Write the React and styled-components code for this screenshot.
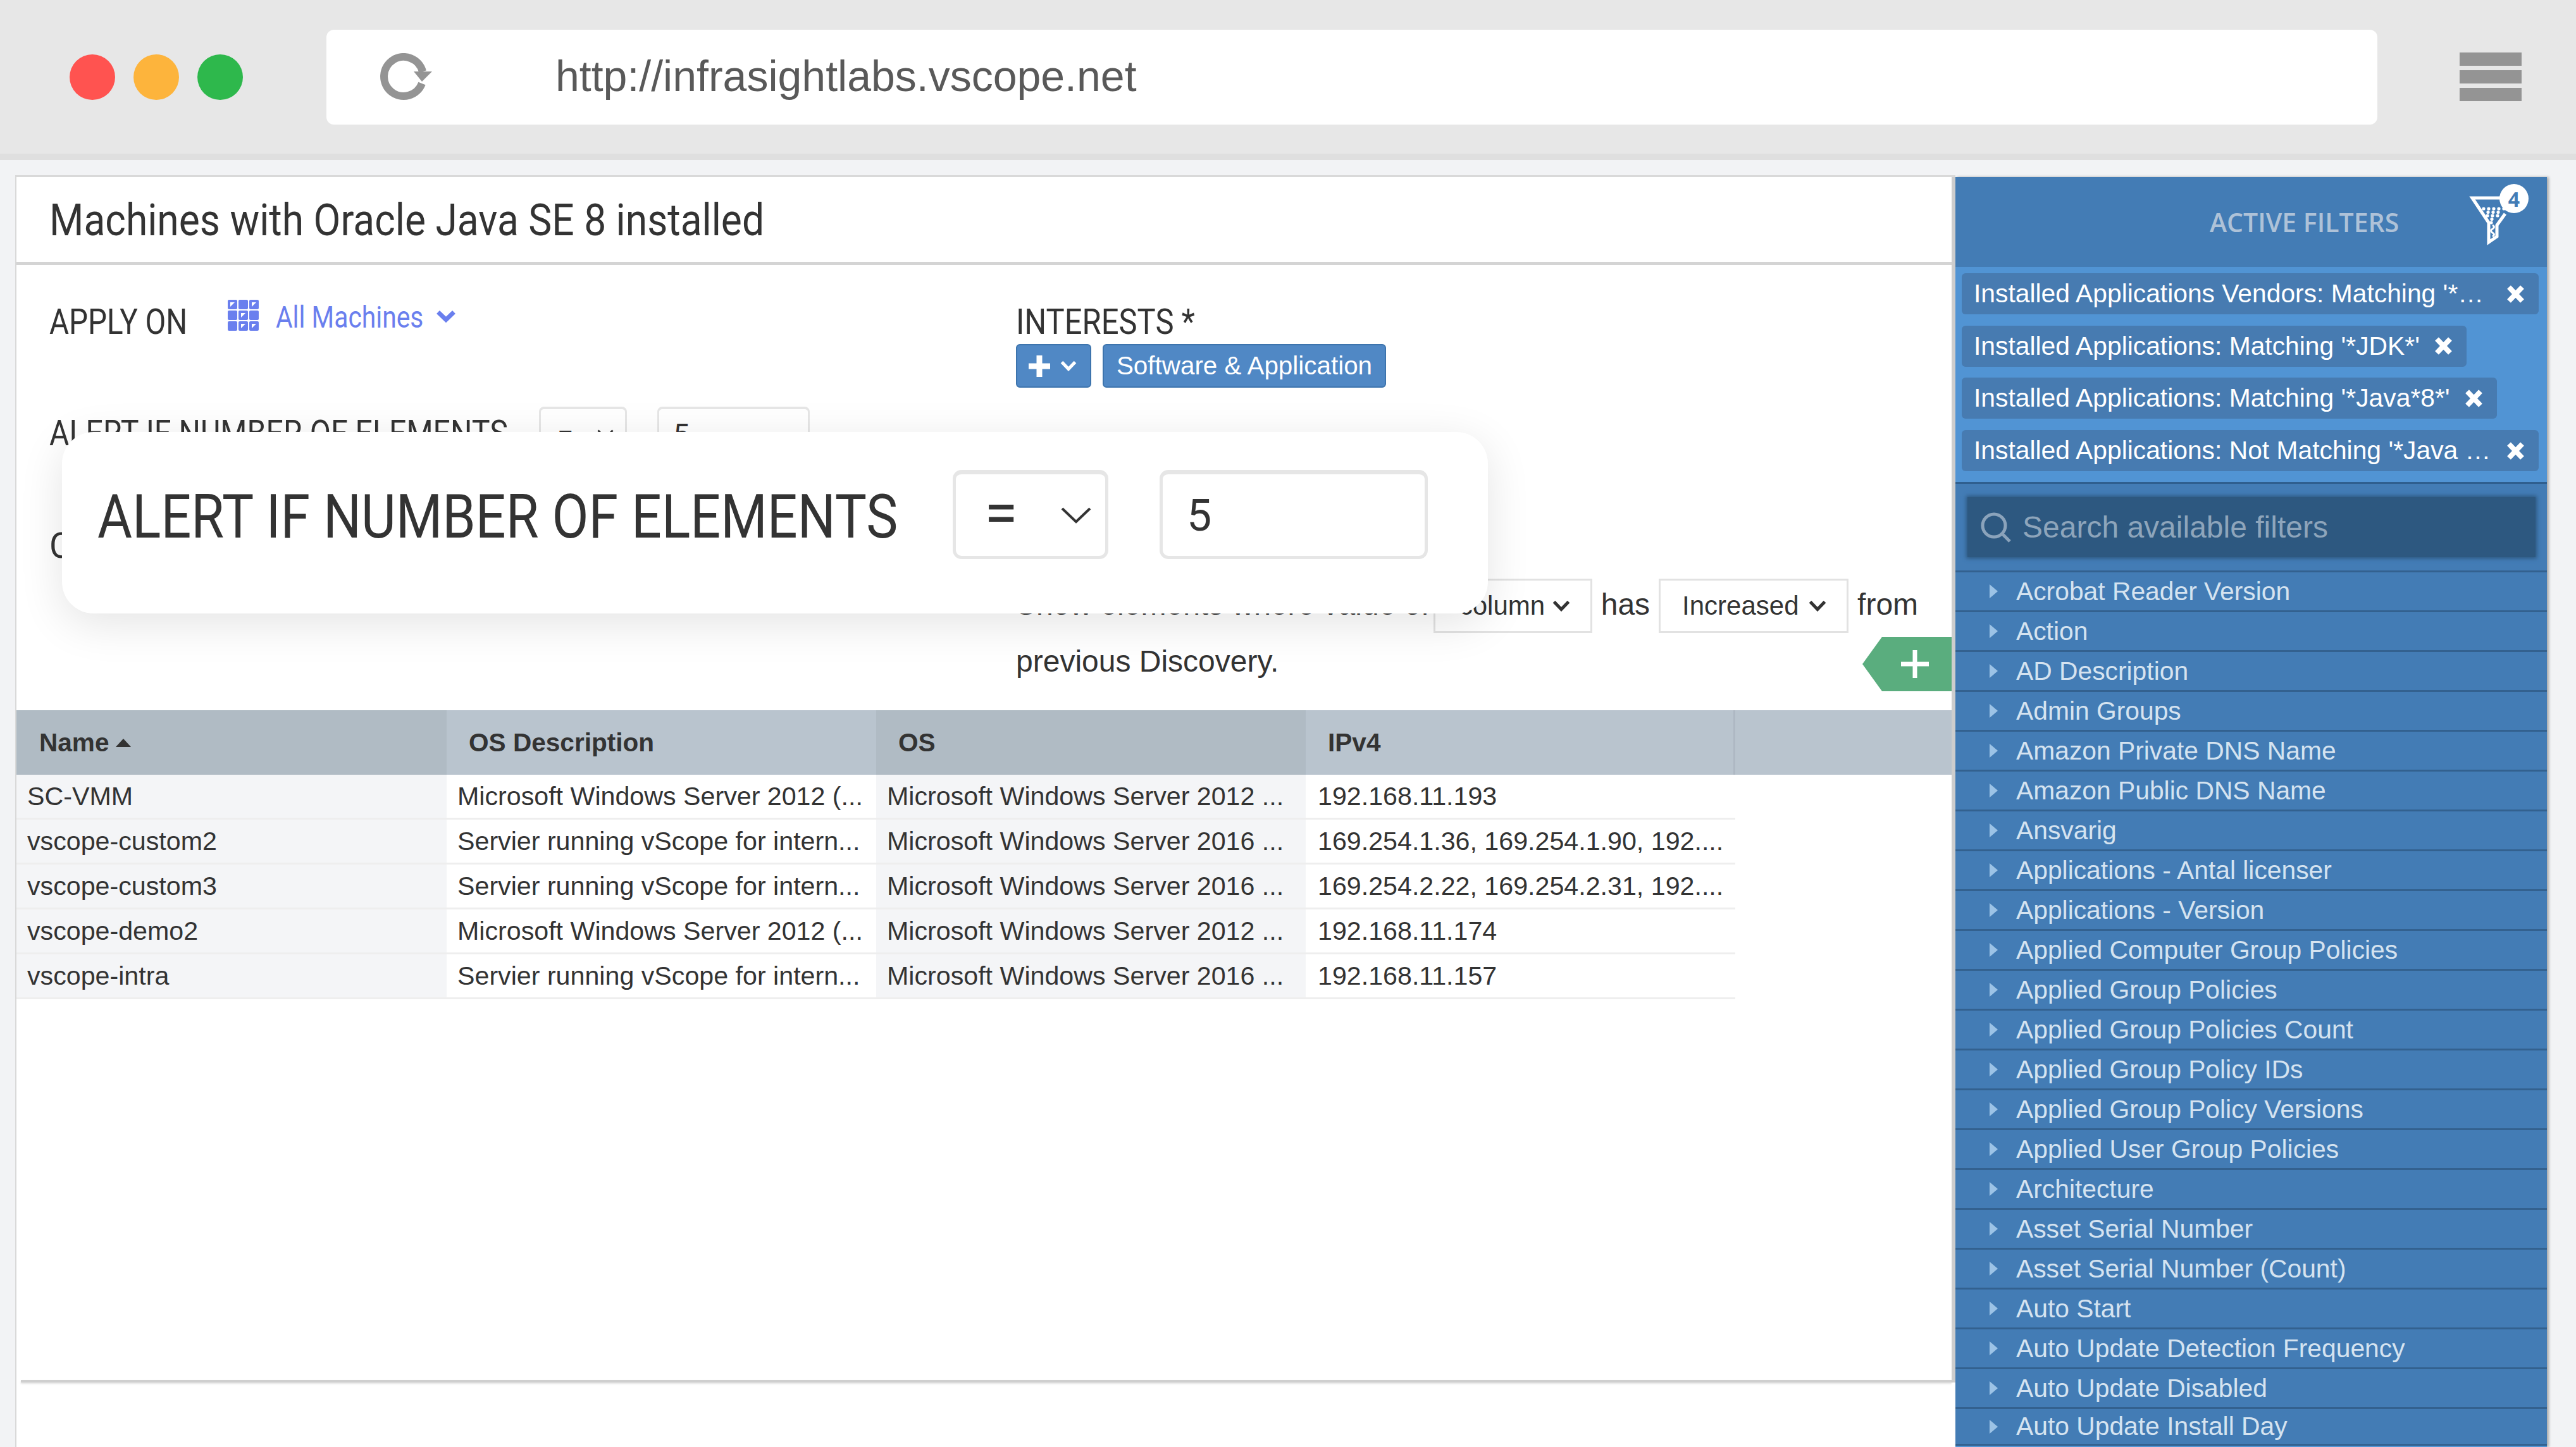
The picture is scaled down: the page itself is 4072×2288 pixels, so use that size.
import React from 'react';
import styled, { createGlobalStyle } from 'styled-components';

const Global = createGlobalStyle`
  html, body { margin: 0; padding: 0; width: 4072px; height: 2288px; overflow: hidden; background: #f2f3f5; }
  * { box-sizing: border-box; }
  body { font-family: "Liberation Sans", Arial, sans-serif; color: #333; }
`;

const Page = styled.div`width: 4072px; height: 2288px; display: flex; flex-direction: column; overflow: hidden; background: #f2f3f5;`;
const TopBar = styled.header`height: 253px; flex: none; display: flex; align-items: center; padding: 0 0 0 110px; background: #e7e7e7; border-bottom: 10px solid #dfdfdf;`;
const Lights = styled.div`display: flex; gap: 29px; margin-right: 132px;`;
const Light = styled.span`width: 72px; height: 72px; border-radius: 50%; background: ${p => p.$c};`;
const UrlBox = styled.div`width: 3242px; height: 150px; border-radius: 12px; background: #fff; display: flex; align-items: center; padding-left: 82px;`;
const UrlText = styled.span`margin: -3px 0 0 190px; font-size: 68px; color: #595959; white-space: nowrap;`;
const Burger = styled.div`margin-left: 130px; width: 98px; display: flex; flex-direction: column; gap: 7px;`;
const BurgerBar = styled.span`height: 21px; background: #949494;`;

const Workspace = styled.div`flex: 1; min-height: 0; display: flex; padding: 24px 0 0 24px;`;
const Panel = styled.main`width: 3067px; background: #fff; border-left: 2px solid #d9d9d9; border-top: 3px solid #d9d9d9; display: flex; flex-direction: column;`;
const Card = styled.div`position: relative; height: 1906px; display: flex; flex-direction: column; border-right: 6px solid #cdcdcd;`;
const TitleBar = styled.div`height: 139px; flex: none; padding: 27px 0 0 52px; border-bottom: 5px solid #d4d4d4; overflow: hidden;`;
const Squeezed = styled.span`display: inline-block; white-space: nowrap; transform: scaleX(${p => p.$x}); transform-origin: left center;`;
const Title = styled.h1`margin: 0; font: 400 70px/82px Roboto, sans-serif; color: #333;`;

const Form = styled.div`height: 704px; flex: none; display: grid; grid-template-columns: 1528px 1fr; padding: 58px 0 0 52px;`;
const Col = styled.div`display: flex; flex-direction: column;`;
const Label = styled.div`flex: none; font: 400 55px/64px Roboto, sans-serif; color: #333; width: ${p => p.$w || 'auto'};`;
const Row = styled.div`display: flex; align-items: flex-start; margin-top: ${p => p.$top || 0}px;`;
const Picker = styled.div`display: flex; align-items: flex-start; margin-top: -3px; color: #6a7fee;`;
const PickerText = styled.div`width: 253px; margin-left: 27px; font: 400 48px/56px Roboto, sans-serif;`;
const PickerChevron = styled.span`display: flex; margin-top: 16px;`;
const SmallSelect = styled.div`width: ${p => p.$w}px; height: 86px; flex: none; display: flex; align-items: center; padding-left: ${p => p.$pad}px; gap: 38px; border: 3px solid #e6e6e6; border-top-width: 4px; border-radius: 8px; font: 400 46px Roboto, sans-serif; color: #333;`;
const AlertLabelBox = styled.div`padding-top: 10px; width: 774px; flex: none;`;
const AlertInputs = styled.div`display: flex; gap: 48px;`;
const Buttons = styled.div`display: flex; gap: 18px; margin-top: 3px;`;
const PlusButton = styled.div`width: 119px; height: 69px; display: flex; align-items: center; padding-left: 18px; gap: 16px; background: #5088c5; border: 2px solid #3d74ad; border-radius: 6px;`;
const TagButton = styled.div`width: 448px; height: 69px; display: flex; align-items: center; justify-content: center; background: #5088c5; border: 2px solid #3d74ad; border-radius: 6px; color: #fff; font-size: 40.4px; white-space: nowrap;`;
const SentenceWrap = styled.div`display: flex; align-items: flex-end; margin-top: 298px;`;
const Sentence = styled.p`flex: none; margin: 0; width: 1440px; font-size: 48px; line-height: 90px; color: #333;`;
const InlineSelect = styled.span`display: inline-flex; align-items: center; justify-content: space-between; width: ${p => p.$w}px; height: 86px; margin: 0 14px 0 ${p => p.$ml || 14}px; padding: 0 32px 0 ${p => p.$pad}px; border: 3px solid #e2e2e2; font-size: 42px; line-height: 55px;`;
const AddButton = styled.div`flex: none; width: 141px; height: 86px; margin: 0 0 -2px -102px; display: flex; align-items: center; justify-content: flex-end; padding-right: 36px; background: #5aad7e; clip-path: polygon(0 50%, 22% 0, 100% 0, 100% 100%, 22% 100%);`;

const TableHead = styled.div`height: 102px; flex: none; display: grid; grid-template-columns: 680px 679px 679px 679px 1fr; background: #b9c4ce;`;
const HeadCell = styled.div`display: flex; align-items: center; padding: 0 0 0 ${p => p.$pad || 35}px; font-weight: 700; font-size: 40.6px; color: #333; background: ${p => p.$dark ? '#b0bbc4' : '#b9c4ce'}; border-right: ${p => p.$edge ? '3px solid #aeb8c3' : 'none'};`;
const SortArrow = styled.span`width: 0; height: 0; margin-left: 10px; border-left: 12px solid transparent; border-right: 12px solid transparent; border-bottom: 13px solid #333;`;
const TableRow = styled.div`width: 2717px; height: 71px; flex: none; display: grid; grid-template-columns: 680px 679px 679px 679px;`;
const Cell = styled.div`display: flex; align-items: center; height: 68px; padding-left: ${p => p.$pad}px; font-size: 41.2px; color: #333; white-space: nowrap; overflow: hidden; background: ${p => p.$shade ? '#f4f5f7' : '#fff'}; box-shadow: 0 3px 0 #eeeeee;`;
const Spacer = styled.div`flex: 1;`;
const BottomRule = styled.div`height: 4px; margin-left: 7px; flex: none; background: #cfcfcf; box-shadow: 0 2px 3px rgba(0,0,0,.12);`;

const Popover = styled.div`position: absolute; left: 72px; top: 403px; width: 2254px; height: 287px; display: flex; align-items: flex-start; padding: 60px 0 0 56px; background: #fff; border-radius: 50px; box-shadow: 0 16px 70px rgba(0,0,0,.11);`;
const BigLabel = styled.div`width: 1352px; flex: none; margin-top: 18px; font: 400 96px/112px Roboto, sans-serif; color: #333;`;
const BigInputs = styled.div`display: flex; gap: 81px;`;
const BigSelect = styled.div`width: 246px; height: 141px; display: flex; align-items: center; justify-content: space-between; padding: 0 22px 0 45px; border: 5px solid #e6e6e6; border-top-width: 7px; border-radius: 14px; color: #333;`;
const BigEquals = styled.span`margin-top: -8px; font: 400 96px/96px Roboto, sans-serif;`;
const BigInput = styled.div`width: 424px; height: 141px; display: flex; align-items: center; padding-left: 38px; border: 5px solid #e6e6e6; border-top-width: 7px; border-radius: 14px; font: 400 70px Roboto, sans-serif; color: #333;`;

const Sidebar = styled.aside`width: 935px; flex: none; margin-top: 3px; display: flex; flex-direction: column; background: #437cb5; box-shadow: 3px 0 4px rgba(0,0,0,.3);`;
const SideHead = styled.div`height: 142px; flex: none; display: flex; align-items: center; padding-left: 402px;`;
const SideTitle = styled.div`width: 387px; flex: none; font: 600 41px "Open Sans", sans-serif; color: #aec2d8; white-space: nowrap;`;
const FunnelWrap = styled.div`position: relative; width: 140px; height: 120px; align-self: flex-start; flex: none;`;
const CountBadge = styled.span`position: absolute; left: 71px; top: 11px; width: 46px; height: 46px; border-radius: 50%; background: #fff; color: #437cb5; display: flex; align-items: center; justify-content: center; font: 700 32px "Open Sans", sans-serif;`;
const ActiveList = styled.div`height: 343px; flex: none; padding: 10px 13px 0 10px; display: flex; flex-direction: column; align-items: flex-start; gap: 17.7px; background: #5194d4; border-bottom: 3px solid #2f5f8f;`;
const FilterTag = styled.div`height: 65px; display: flex; align-items: center; justify-content: space-between; gap: 23px; width: ${p => p.$w}px; padding: 0 22px 0 19px; border-radius: 6px; background: #477bb1; color: #fff; font-size: 40.8px; white-space: nowrap;`;
const SearchArea = styled.div`height: 140px; flex: none; padding: 21px 18px 0 19px; border-bottom: 3px solid #33618f;`;
const SearchBox = styled.div`height: 95px; display: flex; align-items: center; gap: 18px; padding-left: 21px; background: #2d5880; box-shadow: 0 0 6px 2px #2d5880; color: #8ea5bb; font-size: 48px;`;
const FilterRow = styled.div`height: ${p => p.$h}px; flex: none; display: flex; align-items: center; gap: 29px; padding-left: 54px; border-bottom: 3px solid #33618f; color: #d5e3f0; font-size: 40.8px; white-space: nowrap;`;
const Caret = styled.span`width: 0; height: 0; border-top: 11px solid transparent; border-bottom: 11px solid transparent; border-left: 13px solid #9cc3e6;`;
const SideFoot = styled.div`flex: 1; background: #5194d4;`;

const Chevron = ({ w = 28, h = 18, stroke = 5, color = '#333' }) => (
  <svg width={w} height={h} viewBox={`0 0 ${w} ${h}`} fill="none">
    <path d={`M${stroke / 2} ${stroke / 2} L${w / 2} ${h - stroke / 2 - 1} L${w - stroke / 2} ${stroke / 2}`} stroke={color} strokeWidth={stroke} />
  </svg>
);

const Reload = () => (
  <svg width="90" height="76" viewBox="18 14 90 76" fill="none">
    <path d="M87 62 A31 31 0 1 1 88 43" stroke="#949494" strokeWidth="12" />
    <path d="M74 43 H103 L87 59 Z" fill="#949494" />
  </svg>
);

const GridIcon = () => {
  const marked = [0, 2, 4, 7, 8];
  return (
    <svg width="49" height="49" viewBox="0 0 49 49">
      {Array.from({ length: 9 }).map((_, i) => {
        const x = (i % 3) * 17;
        const y = Math.floor(i / 3) * 17;
        return (
          <g key={i}>
            <rect x={x} y={y} width="15" height="15" rx="2" fill="#6a7fee" />
            {marked.includes(i) && <path d={`M${x + 4} ${y + 4} h7 l-7 7 z`} fill="#fff" />}
          </g>
        );
      })}
    </svg>
  );
};

const PlusIcon = ({ size, stroke }) => (
  <svg width={size} height={size} viewBox={`0 0 ${size} ${size}`}>
    <path d={`M${size / 2} 0 V${size} M0 ${size / 2} H${size}`} stroke="#fff" strokeWidth={stroke} />
  </svg>
);

const Funnel = () => {
  const dots = [];
  for (let r = 0; r < 5; r++) {
    const y = 50 + r * 5.5;
    const from = 46 + r * 3;
    const to = 79 - r * 5;
    for (let x = from + (r % 2 ? 4 : 0); x <= to; x += 8) dots.push([x, y]);
  }
  return (
    <svg width="140" height="120" viewBox="0 0 140 120" fill="none">
      <path d="M72 33 H28 L54 72 V103 L67 94 V76 L80 58" stroke="#fff" strokeWidth="5" />
      {dots.map(([x, y]) => <circle key={`${x}-${y}`} cx={x} cy={y} r="2.6" fill="#fff" />)}
      <path d="M60 76 q5 3 0 6 q-5 3 0 6 q5 3 0 6" stroke="#fff" strokeWidth="3" />
    </svg>
  );
};

const CloseX = () => (
  <svg width="29" height="28" viewBox="0 0 29 28" style={{ flex: 'none' }}>
    <path d="M4 3 L25 25 M25 3 L4 25" stroke="#fff" strokeWidth="8" />
  </svg>
);

const SearchIcon = () => (
  <svg width="48" height="48" viewBox="0 0 48 48" fill="none">
    <circle cx="21" cy="21" r="18" stroke="#8ba3bb" strokeWidth="5" />
    <path d="M34 34 L46 46" stroke="#8ba3bb" strokeWidth="5" />
  </svg>
);

const tags = [
  ["Installed Applications Vendors: Matching '*…", 912],
  ["Installed Applications: Matching '*JDK*'", 798],
  ["Installed Applications: Matching '*Java*8*'", 846],
  ["Installed Applications: Not Matching '*Java …", 912],
];

const filters = [
  'Acrobat Reader Version', 'Action', 'AD Description', 'Admin Groups', 'Amazon Private DNS Name',
  'Amazon Public DNS Name', 'Ansvarig', 'Applications - Antal licenser', 'Applications - Version',
  'Applied Computer Group Policies', 'Applied Group Policies', 'Applied Group Policies Count',
  'Applied Group Policy IDs', 'Applied Group Policy Versions', 'Applied User Group Policies', 'Architecture',
  'Asset Serial Number', 'Asset Serial Number (Count)', 'Auto Start', 'Auto Update Detection Frequency',
  'Auto Update Disabled', 'Auto Update Install Day',
];

const rows = [
  ['SC-VMM', 'Microsoft Windows Server 2012 (...', 'Microsoft Windows Server 2012 ...', '192.168.11.193'],
  ['vscope-custom2', 'Servier running vScope for intern...', 'Microsoft Windows Server 2016 ...', '169.254.1.36, 169.254.1.90, 192....'],
  ['vscope-custom3', 'Servier running vScope for intern...', 'Microsoft Windows Server 2016 ...', '169.254.2.22, 169.254.2.31, 192....'],
  ['vscope-demo2', 'Microsoft Windows Server 2012 (...', 'Microsoft Windows Server 2012 ...', '192.168.11.174'],
  ['vscope-intra', 'Servier running vScope for intern...', 'Microsoft Windows Server 2016 ...', '192.168.11.157'],
];

export default function App() {
  return (
    <Page>
      <Global />
      <TopBar>
        <Lights>
          <Light $c="#ff5350" />
          <Light $c="#fdb43c" />
          <Light $c="#2eb84c" />
        </Lights>
        <UrlBox>
          <Reload />
          <UrlText>http://infrasightlabs.vscope.net</UrlText>
        </UrlBox>
        <Burger>
          <BurgerBar />
          <BurgerBar />
          <BurgerBar />
        </Burger>
      </TopBar>
      <Workspace>
        <Panel>
          <Card>
            <TitleBar>
              <Title><Squeezed $x={0.89}>Machines with Oracle Java SE 8 installed</Squeezed></Title>
            </TitleBar>
            <Form>
              <Col>
                <Row>
                  <Label $w="282px"><Squeezed $x={0.865}>APPLY ON</Squeezed></Label>
                  <Picker>
                    <GridIcon />
                    <PickerText><Squeezed $x={0.85}>All Machines</Squeezed></PickerText>
                    <PickerChevron><Chevron w={32} h={20} stroke={7} color="#6a7fee" /></PickerChevron>
                  </Picker>
                </Row>
                <Row $top={102}>
                  <AlertLabelBox>
                    <Label><Squeezed $x={0.878}>ALERT IF NUMBER OF ELEMENTS</Squeezed></Label>
                  </AlertLabelBox>
                  <AlertInputs>
                    <SmallSelect $w={139} $pad={26}>=<Chevron w={26} h={16} stroke={3} /></SmallSelect>
                    <SmallSelect $w={241} $pad={22}>5</SmallSelect>
                  </AlertInputs>
                </Row>
                <Row $top={102}>
                  <Label>C</Label>
                </Row>
              </Col>
              <Col>
                <Label><Squeezed $x={0.89}>INTERESTS *</Squeezed></Label>
                <Buttons>
                  <PlusButton>
                    <PlusIcon size={34} stroke={9} />
                    <Chevron w={26} h={17} stroke={5} color="#fff" />
                  </PlusButton>
                  <TagButton>Software &amp; Application</TagButton>
                </Buttons>
                <SentenceWrap>
                  <Sentence>
                    Show elements where value of
                    <InlineSelect $w={251} $ml={6} $pad={38}>column<Chevron w={28} h={18} /></InlineSelect>
                    has
                    <InlineSelect $w={300} $pad={34}>Increased<Chevron w={28} h={18} /></InlineSelect>
                    from previous Discovery.
                  </Sentence>
                  <AddButton><PlusIcon size={44} stroke={7} /></AddButton>
                </SentenceWrap>
              </Col>
            </Form>
            <TableHead>
              <HeadCell $dark $pad={36}>Name<SortArrow /></HeadCell>
              <HeadCell>OS Description</HeadCell>
              <HeadCell $dark>OS</HeadCell>
              <HeadCell $edge>IPv4</HeadCell>
              <HeadCell />
            </TableHead>
            {rows.map(r => (
              <TableRow key={r[0]}>
                {r.map((v, i) => <Cell key={i} $shade={i % 2 === 0} $pad={i === 3 ? 19 : 17}>{v}</Cell>)}
              </TableRow>
            ))}
            <Spacer />
            <BottomRule />
            <Popover>
              <BigLabel><Squeezed $x={0.878}>ALERT IF NUMBER OF ELEMENTS</Squeezed></BigLabel>
              <BigInputs>
                <BigSelect><BigEquals>=</BigEquals><Chevron w={48} h={26} stroke={4} /></BigSelect>
                <BigInput>5</BigInput>
              </BigInputs>
            </Popover>
          </Card>
        </Panel>
        <Sidebar>
          <SideHead>
            <SideTitle>ACTIVE FILTERS</SideTitle>
            <FunnelWrap>
              <Funnel />
              <CountBadge>4</CountBadge>
            </FunnelWrap>
          </SideHead>
          <ActiveList>
            {tags.map(([t, w]) => (
              <FilterTag key={t} $w={w}><span>{t}</span><CloseX /></FilterTag>
            ))}
          </ActiveList>
          <SearchArea>
            <SearchBox><SearchIcon />Search available filters</SearchBox>
          </SearchArea>
          {filters.map((f, i) => (
            <FilterRow key={f} $h={i === filters.length - 1 ? 58 : 63}><Caret />{f}</FilterRow>
          ))}
          <SideFoot />
        </Sidebar>
      </Workspace>
    </Page>
  );
}
